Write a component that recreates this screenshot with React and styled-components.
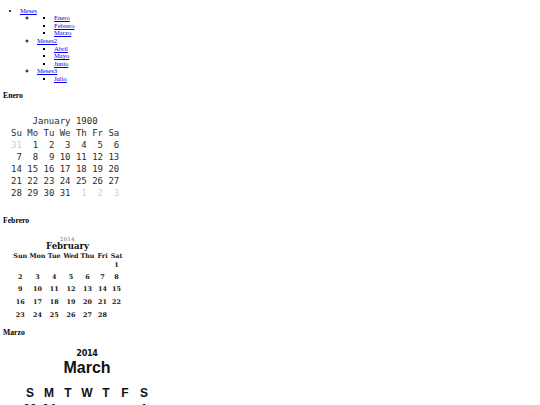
import React from 'react';
import styled, { createGlobalStyle } from 'styled-components';

const GlobalStyle = createGlobalStyle`
  html, body {
    background: #fff;
  }
  body {
    margin: 0 3px 3px;
    font-family: "Liberation Serif", "Times New Roman", serif;
    font-size: 6.6px;
    line-height: 7.6px;
    color: #000;
  }
`;

const Menu = styled.ul`
  margin: ${({ $nested }) => ($nested ? '0' : '6.6px 0 9.3px')};
  padding-left: 17px;
  list-style-type: ${({ $type }) => $type};
`;

const MenuLink = styled.a`
  color: #0000ee;
  text-decoration: underline;
`;

const Heading = styled.h3`
  margin: 7.7px 0;
  font-size: 7.7px;
  line-height: 8.9px;
  font-weight: bold;
`;

/* January: plain monospace calendar */
const MonoCal = styled.div`
  display: grid;
  width: max-content;
  grid-template-columns: repeat(7, 2ch);
  column-gap: 1ch;
  grid-auto-rows: 12px;
  align-items: center;
  padding: 7px 0 10.3px 8px;
  font-family: "DejaVu Sans Mono", "Liberation Mono", monospace;
  font-size: 9px;
  line-height: 1;
  color: #2b2b2b;
`;

const MonoTitle = styled.div`
  grid-column: 1 / -1;
  text-align: center;
`;

const MonoCell = styled.div`
  text-align: right;
  color: ${({ $muted }) => ($muted ? '#cfcfcf' : 'inherit')};
`;

/* February: heavy serif calendar */
const SerifCal = styled.div`
  display: grid;
  width: max-content;
  grid-template-columns: 17.5px 17px 16.5px 17px 16px 14px 14px;
  grid-template-rows: 5px 8px 1.5px 8px 10.5px 13px 12.5px 12.5px 13px;
  align-items: center;
  justify-items: center;
  padding: 3.4px 0 0 8.5px;
  font-family: "DejaVu Serif", "Liberation Serif", serif;
  font-weight: bold;
  font-size: 6.4px;
  line-height: 1;
  color: #111;
`;

const SerifYear = styled.div`
  grid-column: 1 / -1;
  font-size: 5px;
  font-weight: normal;
  letter-spacing: 0.6px;
  color: #555;
`;

const SerifMonth = styled.div`
  grid-column: 1 / -1;
  grid-row: 2;
  font-size: 8.6px;
`;

const SerifCell = styled.div`
  grid-row: ${({ $row }) => $row};
  grid-column: ${({ $col }) => $col};
`;

/* March: big sans calendar */
const SansCal = styled.div`
  display: grid;
  width: max-content;
  grid-template-columns: repeat(7, 19px);
  grid-template-rows: 11px 17px 8.5px 16px;
  grid-auto-rows: 16px;
  align-items: center;
  justify-items: center;
  padding: 2.7px 0 0 17.5px;
  font-family: "Liberation Sans", Arial, sans-serif;
  font-weight: bold;
  font-size: 12px;
  line-height: 1;
  color: #111;
`;

const SansYear = styled.div`
  grid-column: 1 / -1;
  font-family: "DejaVu Sans Condensed", "Liberation Sans", sans-serif;
  font-size: 9px;
  letter-spacing: -0.3px;
`;

const SansMonth = styled.div`
  grid-column: 1 / -1;
  font-size: 16px;
`;

const Gap = styled.div`
  grid-column: 1 / -1;
`;

const SansCell = styled.div`
  color: inherit;
`;

const menu = [
  { label: null, items: ['Enero', 'Febrero', 'Marzo'] },
  { label: 'Meses2', items: ['Abril', 'Mayo', 'Junio'] },
  { label: 'Meses3', items: ['Julio'] },
];

const weekdaysShort = ['Su', 'Mo', 'Tu', 'We', 'Th', 'Fr', 'Sa'];
const weekdaysSerif = ['Sun', 'Mon', 'Tue', 'Wed', 'Thu', 'Fri', 'Sat'];
const weekdaysSans = ['S', 'M', 'T', 'W', 'T', 'F', 'S'];

// January 1900 starts on Monday
const januaryDays = [
  { d: 31, muted: true },
  ...Array.from({ length: 31 }, (_, i) => ({ d: i + 1 })),
  { d: 1, muted: true },
  { d: 2, muted: true },
  { d: 3, muted: true },
];

// February 2014 starts on Saturday
const februaryDays = Array.from({ length: 28 }, (_, i) => {
  const idx = i + 6;
  return { d: i + 1, row: 5 + Math.floor(idx / 7), col: (idx % 7) + 1 };
});

// March 2014 starts on Saturday
const marchDays = [
  { d: 23 },
  { d: 24 },
  { d: '' },
  { d: '' },
  { d: '' },
  { d: '' },
  ...Array.from({ length: 31 }, (_, i) => ({ d: i + 1 })),
];

const App = () => (
  <>
    <GlobalStyle />
    <Menu $type="disc">
      <li>
        <MenuLink href="#">Meses</MenuLink>
        <Menu $nested $type="circle">
          {menu.map((group, g) => (
            <li key={g}>
              {group.label && <MenuLink href="#">{group.label}</MenuLink>}
              <Menu $nested $type="square">
                {group.items.map((item) => (
                  <li key={item}>
                    <MenuLink href="#">{item}</MenuLink>
                  </li>
                ))}
              </Menu>
            </li>
          ))}
        </Menu>
      </li>
    </Menu>

    <Heading>Enero</Heading>
    <MonoCal>
      <MonoTitle>January 1900</MonoTitle>
      {weekdaysShort.map((w) => (
        <MonoCell key={w}>{w}</MonoCell>
      ))}
      {januaryDays.map((day, i) => (
        <MonoCell key={i} $muted={day.muted}>{day.d}</MonoCell>
      ))}
    </MonoCal>

    <Heading>Febrero</Heading>
    <SerifCal>
      <SerifYear>2014</SerifYear>
      <SerifMonth>February</SerifMonth>
      {weekdaysSerif.map((w, i) => (
        <SerifCell key={w} $row={4} $col={i + 1}>{w}</SerifCell>
      ))}
      {februaryDays.map((day) => (
        <SerifCell key={day.d} $row={day.row} $col={day.col}>{day.d}</SerifCell>
      ))}
    </SerifCal>

    <Heading>Marzo</Heading>
    <SansCal>
      <SansYear>2014</SansYear>
      <SansMonth>March</SansMonth>
      <Gap />
      {weekdaysSans.map((w, i) => (
        <SansCell key={i}>{w}</SansCell>
      ))}
      {marchDays.map((day, i) => (
        <SansCell key={i}>{day.d}</SansCell>
      ))}
    </SansCal>
  </>
);

export default App;
